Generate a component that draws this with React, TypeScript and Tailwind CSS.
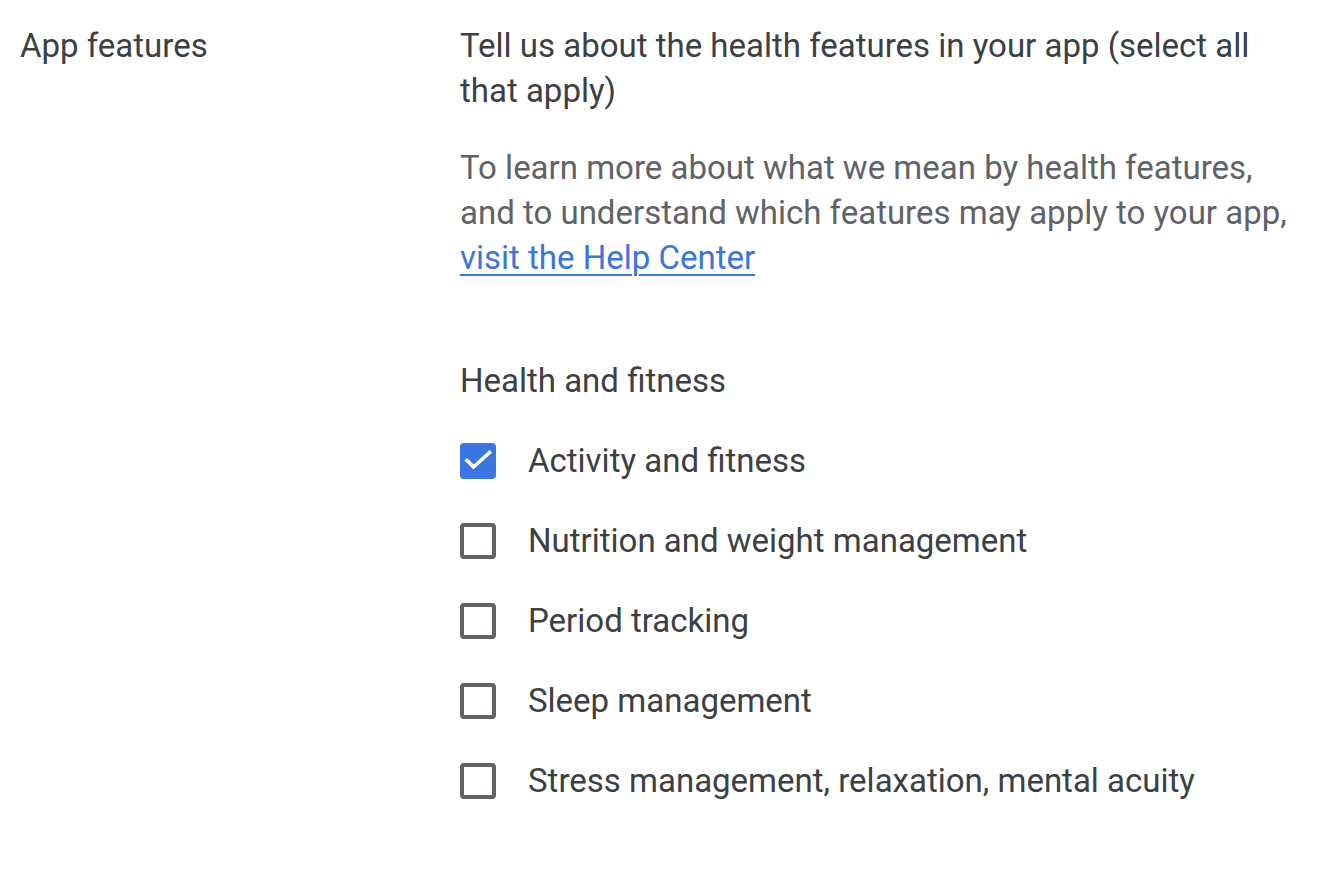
import React, { useState } from "react";

const options = [
  "Activity and fitness",
  "Nutrition and weight management",
  "Period tracking",
  "Sleep management",
  "Stress management, relaxation, mental acuity",
];

function Box({ checked }: { checked: boolean }) {
  if (checked) {
    return (
      <span className="flex h-[36px] w-[36px] shrink-0 items-center justify-center rounded-[4px] bg-[#3a75e0]">
        <svg width="36" height="36" viewBox="0 0 36 36" fill="none">
          <path d="M7 17.5l6.5 6.5L29.5 9.5" stroke="#fff" strokeWidth="3.6" strokeLinecap="square" />
        </svg>
      </span>
    );
  }
  return <span className="h-[36px] w-[36px] shrink-0 rounded-[4px] border-[4px] border-[#5f6368] bg-white" />;
}

export default function App() {
  const [sel, setSel] = useState<boolean[]>([true, false, false, false, false]);
  return (
    <div
      className="min-h-screen bg-white text-[33px] text-[#3c4043]"
      style={{ fontFamily: "Roboto, 'Noto Sans', sans-serif" }}
    >
      <div className="flex pl-[20px] pt-[23px]">
        <div className="w-[440px] shrink-0 leading-[45px]">App features</div>
        <div className="w-[850px]">
          <p className="leading-[45px]">
            Tell us about the health features in your app (select all that apply)
          </p>
          <p className="mt-[32px] leading-[45px] text-[#5f6368]">
            To learn more about what we mean by health features, and to understand which features may apply to your
            app,{" "}
            <a href="#" className="text-[#3a75e0] underline underline-offset-[5px] decoration-[2px]">
              visit the Help Center
            </a>
          </p>
          <div className="mt-[78px] leading-[45px]">Health and fitness</div>
          <div className="mt-[40px] flex flex-col gap-[44px]">
            {options.map((o, i) => (
              <label
                key={o}
                className="flex h-[36px] cursor-pointer items-center gap-[32px]"
                onClick={() => setSel((s) => s.map((v, j) => (j === i ? !v : v)))}
              >
                <Box checked={sel[i]} />
                <span className="leading-[36px]">{o}</span>
              </label>
            ))}
          </div>
        </div>
      </div>
    </div>
  );
}
